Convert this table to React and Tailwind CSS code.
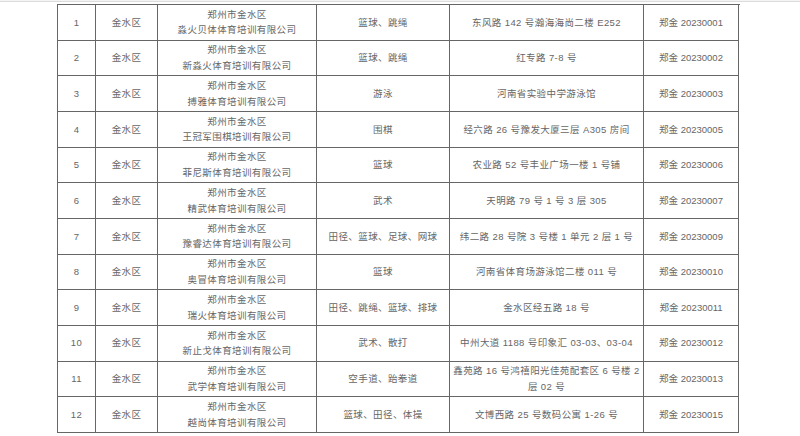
import React from "react";

const rows = [
  ["1", "淼火贝体体育培训有限公司", "篮球、跳绳", "东风路 142 号瀚海海尚二楼 E252", "20230001"],
  ["2", "新淼火体育培训有限公司", "篮球、跳绳", "红专路 7-8 号", "20230002"],
  ["3", "搏雅体育培训有限公司", "游泳", "河南省实验中学游泳馆", "20230003"],
  ["4", "王冠军围棋培训有限公司", "围棋", "经六路 26 号豫发大厦三层 A305 房间", "20230005"],
  ["5", "菲尼斯体育培训有限公司", "篮球", "农业路 52 号丰业广场一楼 1 号铺", "20230006"],
  ["6", "精武体育培训有限公司", "武术", "天明路 79 号 1 号 3 层 305", "20230007"],
  ["7", "豫睿达体育培训有限公司", "田径、篮球、足球、网球", "纬二路 28 号院 3 号楼 1 单元 2 层 1 号", "20230009"],
  ["8", "奥冒体育培训有限公司", "篮球", "河南省体育场游泳馆二楼 011 号", "20230010"],
  ["9", "瑞火体育培训有限公司", "田径、跳绳、篮球、排球", "金水区经五路 18 号", "20230011"],
  ["10", "新止戈体育培训有限公司", "武术、散打", "中州大道 1188 号印象汇 03-03、03-04", "20230012"],
  ["11", "武学体育培训有限公司", "空手道、跆拳道", ["鑫苑路 16 号鸿禧阳光佳苑配套区 6 号楼 2", "层 02 号"], "20230013"],
  ["12", "越尚体育培训有限公司", "篮球、田径、体操", "文博西路 25 号数码公寓 1-26 号", "20230015"],
];

const cell =
  "h-[35.67px] border-r-[1.5px] border-b-[1.5px] border-[#666] flex flex-col items-center justify-center text-center leading-[15.5px]";

export default function App() {
  return (
    <div
      className="w-[800px] h-[436px] bg-white overflow-hidden text-[9.5px] text-[#666] tracking-[0.4px]"
      style={{ fontFamily: '"Liberation Sans", "Noto Sans CJK SC", sans-serif' }}
    >
      <div className="h-[2px] border-b border-[#dcdcdc] bg-[#f4f4f4]" />
      <div className="pt-[2px] pl-[57px]">
        <div className="w-[683px] border-l-[1.5px] border-t-[1.5px] border-[#666]">
          {rows.map(([no, name, sport, addr, code]) => (
            <div key={no} className="grid grid-cols-[38px_62px_159px_133px_194px_95px]">
              <div className={cell}>{no}</div>
              <div className={cell}>金水区</div>
              <div className={cell}>
                <span>郑州市金水区</span>
                <span>{name}</span>
              </div>
              <div className={cell}>{sport}</div>
              <div className={cell}>
                {Array.isArray(addr) ? (
                  <>
                    <span>{addr[0]}</span>
                    <span>{addr[1]}</span>
                  </>
                ) : (
                  addr
                )}
              </div>
              <div className={cell + " tracking-normal"}>郑金 {code}</div>
            </div>
          ))}
        </div>
      </div>
    </div>
  );
}
